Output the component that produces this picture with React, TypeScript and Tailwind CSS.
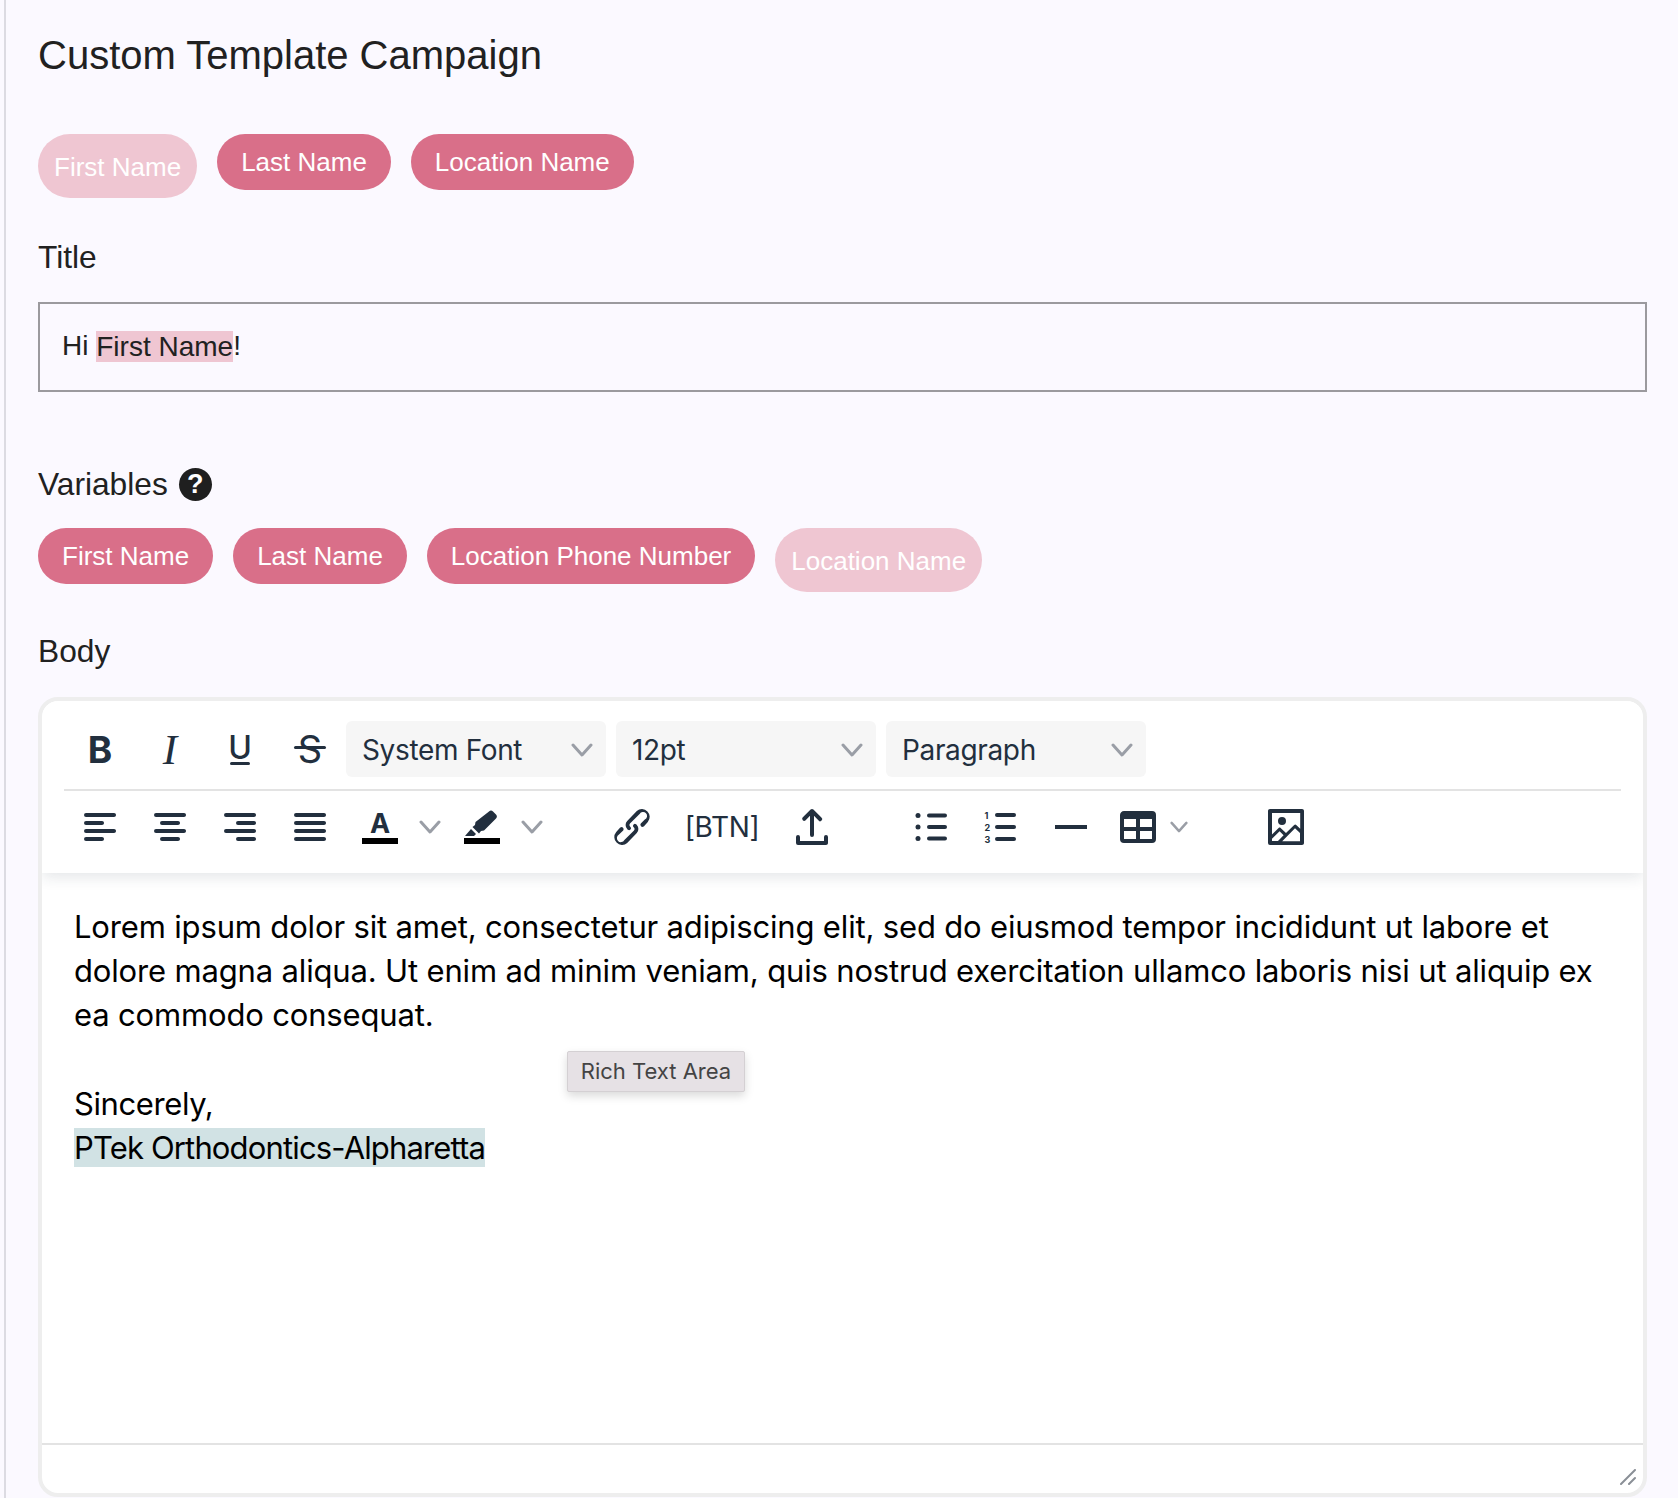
const sans = "font-['Liberation_Sans',Arial,sans-serif]";
const ink = "#222f3e";

function Icon({ d, size = 48 }: { d: string; size?: number }) {
  return (
    <svg width={size} height={size} viewBox="0 0 24 24" fill={ink} fillRule="nonzero">
      <path d={d} />
    </svg>
  );
}

function Chevron() {
  return (
    <svg width="22" height="14" viewBox="0 0 22 14" fill="none" stroke="#9a9ea6" strokeWidth="3" strokeLinecap="round" strokeLinejoin="round">
      <path d="M2 2l9 10 9-10" />
    </svg>
  );
}

function Pill({ label, faded }: { label: string; faded?: boolean }) {
  if (faded) {
    return (
      <span className="h-[64px] px-[16px] pt-[2px] rounded-[32px] bg-[#efc6d2] text-white text-[26px] flex items-center">
        {label}
      </span>
    );
  }
  return (
    <span className="h-[56px] px-[24px] rounded-[28px] bg-[#d96f89] text-white text-[26px] flex items-center">
      {label}
    </span>
  );
}

function Btn({ className = "w-[70px]", children }: { className?: string; children: React.ReactNode }) {
  return <div className={`${className} h-[56px] shrink-0 flex items-center justify-center`}>{children}</div>;
}

function Select({ label }: { label: string }) {
  return (
    <div className="w-[260px] h-[56px] shrink-0 pl-[16px] pr-[13px] pt-[1px] rounded-md bg-[#f6f6f6] flex items-center justify-between text-[28px] tracking-[-0.35px] text-[#222f3e]">
      {label}
      <Chevron />
    </div>
  );
}

const paths = {
  left: "M5 5h14c.6 0 1 .4 1 1s-.4 1-1 1H5a1 1 0 1 1 0-2zm0 4h8c.6 0 1 .4 1 1s-.4 1-1 1H5a1 1 0 1 1 0-2zm0 8h8c.6 0 1 .4 1 1s-.4 1-1 1H5a1 1 0 0 1 0-2zm0-4h14c.6 0 1 .4 1 1s-.4 1-1 1H5a1 1 0 0 1 0-2z",
  center: "M5 5h14c.6 0 1 .4 1 1s-.4 1-1 1H5a1 1 0 1 1 0-2zm3 4h8c.6 0 1 .4 1 1s-.4 1-1 1H8a1 1 0 1 1 0-2zm0 8h8c.6 0 1 .4 1 1s-.4 1-1 1H8a1 1 0 0 1 0-2zm-3-4h14c.6 0 1 .4 1 1s-.4 1-1 1H5a1 1 0 0 1 0-2z",
  right: "M5 5h14c.6 0 1 .4 1 1s-.4 1-1 1H5a1 1 0 1 1 0-2zm6 4h8c.6 0 1 .4 1 1s-.4 1-1 1h-8a1 1 0 0 1 0-2zm0 8h8c.6 0 1 .4 1 1s-.4 1-1 1h-8a1 1 0 0 1 0-2zm-6-4h14c.6 0 1 .4 1 1s-.4 1-1 1H5a1 1 0 0 1 0-2z",
  justify: "M5 5h14c.6 0 1 .4 1 1s-.4 1-1 1H5a1 1 0 1 1 0-2zm0 4h14c.6 0 1 .4 1 1s-.4 1-1 1H5a1 1 0 1 1 0-2zm0 4h14c.6 0 1 .4 1 1s-.4 1-1 1H5a1 1 0 0 1 0-2zm0 4h14c.6 0 1 .4 1 1s-.4 1-1 1H5a1 1 0 0 1 0-2z",
  link: "M6.2 12.3a1 1 0 0 1 1.4 1.4l-2.1 2.1a2 2 0 1 0 2.7 2.7l4.8-4.8a1 1 0 0 0 0-1.4 1 1 0 1 1 1.4-1.3 2.9 2.9 0 0 1 0 4L9.6 20a3.9 3.9 0 0 1-5.5-5.5l2-2.2zm11.6-.6a1 1 0 0 1-1.4-1.4l2-2a2 2 0 1 0-2.6-2.8L11 10.3a1 1 0 0 0 0 1.4A1 1 0 1 1 9.6 13a2.9 2.9 0 0 1 0-4L14.4 4a3.9 3.9 0 0 1 5.5 5.5l-2 2.2z",
  upload: "M18 19v-2a1 1 0 0 1 2 0v3c0 .6-.4 1-1 1H5a1 1 0 0 1-1-1v-3a1 1 0 0 1 2 0v2h12zM11 6.4L8.7 8.7a1 1 0 0 1-1.4-1.4l4-4a1 1 0 0 1 1.4 0l4 4a1 1 0 1 1-1.4 1.4L13 6.4V16a1 1 0 0 1-2 0V6.4z",
  hr: "M4 11h16v2H4z",
  table: "M19 4a2 2 0 0 1 2 2v12a2 2 0 0 1-2 2H5a2 2 0 0 1-2-2V6c0-1.1.9-2 2-2h14zM5 14v4h6v-4H5zm14 0h-6v4h6v-4zm0-6h-6v4h6V8zM5 12h6V8H5v4z",
  image: "M5 15.7l3.3-3.2c.3-.3.7-.3 1 0L12 15l4.1-4c.3-.4.8-.4 1 0l2 1.9V5H5v10.7zM5 18V19h3l2.8-2.9-2-2L5 17.9zm14-3l-2.5-2.4-6.4 6.5H19v-4zM4 3h16c.6 0 1 .4 1 1v16c0 .6-.4 1-1 1H4a1 1 0 0 1-1-1V4c0-.6.4-1 1-1zm6 8a2 2 0 1 0 0-4 2 2 0 0 0 0 4z",
};

function BulletList() {
  return (
    <svg width="32" height="28" viewBox="0 0 32 28" fill={ink}>
      <circle cx="3" cy="2.5" r="2.5" />
      <circle cx="3" cy="14" r="2.5" />
      <circle cx="3" cy="25.5" r="2.5" />
      <rect x="12" y="0.5" width="20" height="4" rx="2" />
      <rect x="12" y="12" width="20" height="4" rx="2" />
      <rect x="12" y="23.5" width="20" height="4" rx="2" />
    </svg>
  );
}

function NumberList() {
  return (
    <div className="w-[31px] mr-[2px] flex flex-col gap-[1px]">
      {["1", "2", "3"].map((n) => (
        <div key={n} className="h-[11px] flex items-center justify-between">
          <span className="text-[9px] leading-[11px] font-bold text-[#222f3e]">{n}</span>
          <span className="w-[21px] h-[4px] rounded-full bg-[#222f3e]" />
        </div>
      ))}
    </div>
  );
}

function Highlighter() {
  return (
    <svg width="36" height="28" viewBox="0 0 36 28" fill={ink}>
      <path d="M25 1.5a3 3 0 0 1 4 0l3 3a3 3 0 0 1 0 4L20 20.5l-3 .5-2 2.5-6.5-6.5 2.5-2 .5-3z" />
      <path d="M7 19l5 5-2 2H1z" />
    </svg>
  );
}

export default function App() {
  return (
    <div className={`w-[1678px] h-[1498px] overflow-hidden bg-[#fbf9ff] ${sans} text-[#212121]`}>
      <div className="ml-[4px] h-full border-l-2 border-[#dcdbe2] pl-[32px] pr-[31px] pt-[32px]">
        <h1 className="text-[40px] leading-[46px]">Custom Template Campaign</h1>

        <div className="mt-[56px] flex items-start gap-[20px]">
          <Pill label="First Name" faded />
          <Pill label="Last Name" />
          <Pill label="Location Name" />
        </div>

        <div className="mt-[40px] text-[31.7px] leading-[38px]">Title</div>
        <div className="mt-[26px] h-[90px] border-2 border-[#9b9a9e] pl-[22px] pb-[2px] flex items-center text-[28px]">
          Hi&nbsp;<span className="bg-[#efc6d2] leading-[31px]">First Name</span>!
        </div>

        <div className="mt-[73px] flex items-center gap-[11px] h-[38px]">
          <span className="text-[31.7px] leading-[38px]">Variables</span>
          <span className="w-[33px] h-[33px] rounded-full bg-[#1f1f1f] text-white text-[27px] font-bold flex items-center justify-center">?</span>
        </div>

        <div className="mt-[25px] flex items-start gap-[20px]">
          <Pill label="First Name" />
          <Pill label="Last Name" />
          <Pill label="Location Phone Number" />
          <Pill label="Location Name" faded />
        </div>

        <div className="mt-[40px] text-[31.7px] leading-[38px]">Body</div>

        <div className="mt-[27px] h-[800px] border-4 border-[#eeeeee] rounded-[20px] bg-white overflow-hidden flex flex-col font-['Inter',sans-serif]">
          <div className="relative z-10 h-[172px] shrink-0 px-[22px] pt-[20px] bg-white shadow-[0_4px_14px_rgba(34,47,62,0.12)]">
            <div className="flex items-center pl-[1px] gap-0">
              <Btn>
                <span className="text-[37px] font-bold leading-none text-[#222f3e]">B</span>
              </Btn>
              <Btn>
                <span className="font-['Liberation_Serif',serif] italic text-[43px] leading-none text-[#222f3e]">I</span>
              </Btn>
              <Btn>
                <span className="flex flex-col items-center">
                  <span className="text-[32px] font-medium leading-[27px] text-[#222f3e]">U</span>
                  <span className="mt-[1px] w-[20px] h-[3px] rounded-full bg-[#222f3e]" />
                </span>
              </Btn>
              <Btn>
                <span className="relative w-[32px] h-[36px] flex items-center justify-center">
                  <span className="text-[38px] leading-none text-[#222f3e]">S</span>
                  <span className="absolute left-0 top-[15px] w-[32px] h-[3px] rounded-full bg-[#222f3e]" />
                </span>
              </Btn>
              <div className="ml-[1px] flex gap-[10px]">
                <Select label="System Font" />
                <Select label="12pt" />
                <Select label="Paragraph" />
              </div>
            </div>
            <div className="mt-[12px] h-[2px] bg-[#e3e3e3]" />
            <div className="mt-[8px] flex items-center pl-[1px]">
              <Btn><Icon d={paths.left} /></Btn>
              <Btn><Icon d={paths.center} /></Btn>
              <Btn><Icon d={paths.right} /></Btn>
              <Btn><Icon d={paths.justify} /></Btn>
              <Btn>
                <span className="w-[36px] flex flex-col items-center">
                  <span className="h-[28px] text-[27px] font-bold leading-[28px] text-[#222f3e]">A</span>
                  <span className="w-[36px] h-[6px] bg-black" />
                </span>
              </Btn>
              <Btn className="w-[30px]"><Chevron /></Btn>
              <Btn className="w-[70px] ml-[2px]">
                <span className="w-[36px] flex flex-col items-center">
                  <Highlighter />
                  <span className="w-[36px] h-[6px] bg-black" />
                </span>
              </Btn>
              <Btn className="w-[30px]"><Chevron /></Btn>
              <Btn className="w-[70px] ml-[50px]"><Icon d={paths.link} /></Btn>
              <Btn className="w-[110px]">
                <span className="text-[28px] tracking-[-0.35px] text-[#222f3e]">[BTN]</span>
              </Btn>
              <Btn><Icon d={paths.upload} /></Btn>
              <Btn className="w-[70px] ml-[49px]"><BulletList /></Btn>
              <Btn><NumberList /></Btn>
              <Btn><Icon d={paths.hr} /></Btn>
              <Btn className="w-[64px]"><Icon d={paths.table} /></Btn>
              <Btn className="w-[18px]"><Chevron /></Btn>
              <Btn className="w-[70px] ml-[63px]"><Icon d={paths.image} /></Btn>
            </div>
          </div>

          <div className="relative flex-1 pl-[32px] pr-[33px] pt-[32px] text-[31px] leading-[44px] text-black">
            <p className="tracking-[-0.16px]">
              Lorem ipsum dolor sit amet, consectetur adipiscing elit, sed do eiusmod tempor incididunt ut labore et dolore magna aliqua. Ut enim ad minim veniam, quis nostrud exercitation ullamco laboris nisi ut aliquip ex ea commodo consequat.
            </p>
            <p className="mt-[45px] tracking-[-0.4px]">Sincerely,</p>
            <p className="tracking-[-0.85px]">
              <span className="bg-[#d1e2e4] py-[1px]">PTek Orthodontics-Alpharetta</span>
            </p>
            <div className="absolute left-[525px] top-[178px] w-[178px] h-[41px] bg-[#e6e1e5] border border-[#d4d0d3] rounded-[2px] shadow-[0_4px_10px_rgba(0,0,0,0.15)] flex items-center justify-center pb-[1px] text-[22px] tracking-normal leading-none text-[#444444]">
              Rich Text Area
            </div>
          </div>

          <div className="h-[50px] shrink-0 border-t-2 border-[#e3e3e3] flex items-end justify-end pr-[7px] pb-[8px]">
            <svg width="16" height="16" viewBox="0 0 16 16" stroke="#8a8f96" strokeWidth="2" strokeLinecap="round">
              <path d="M1 15L15 1M9 15l6-6" />
            </svg>
          </div>
        </div>
      </div>
    </div>
  );
}
